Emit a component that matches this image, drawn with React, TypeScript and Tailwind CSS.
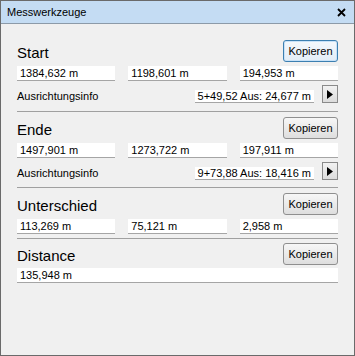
import React from "react";

const font = { fontFamily: '"Liberation Sans", Arial, sans-serif' };

function Btn({ focused }: { focused?: boolean }) {
  return (
    <div
      className={
        "w-[55px] h-[22px] rounded-[3px] border flex items-center justify-center text-[11px] text-black " +
        (focused
          ? "border-[#3c7fb1] bg-gradient-to-b from-[#f4f8fc] to-[#e3edf7] shadow-[inset_0_0_0_1px_#c8e2f8]"
          : "border-[#8f8f8f] bg-gradient-to-b from-[#f7f7f7] to-[#dedede]")
      }
    >
      Kopieren
    </div>
  );
}

function Field({ v }: { v: string }) {
  return (
    <div className="h-[15px] bg-white border-b border-[#a5a5a5] pl-[3px] text-[11px] leading-[14px] text-black whitespace-nowrap">
      {v}
    </div>
  );
}

function Header({ title, focused }: { title: string; focused?: boolean }) {
  return (
    <div className="flex items-end justify-between h-[22px]">
      <div className="text-[15px] leading-[18px] text-black">{title}</div>
      <Btn focused={focused} />
    </div>
  );
}

function Fields3({ a, b, c }: { a: string; b: string; c: string }) {
  return (
    <div className="grid grid-cols-3 gap-[13px] mt-[4px]">
      <Field v={a} />
      <Field v={b} />
      <Field v={c} />
    </div>
  );
}

function Info({ v }: { v: string }) {
  return (
    <div className="flex items-end h-[18px] mt-[4px]">
      <div className="text-[11px] leading-[14px] text-black flex-1">Ausrichtungsinfo</div>
      <div className="h-[13px] bg-white border-b border-[#a5a5a5] px-[3px] text-[11px] leading-[12px] text-black whitespace-nowrap">
        {v}
      </div>
      <div className="ml-[8px] w-[16px] h-[18px] border border-[#8a8a8a] bg-gradient-to-b from-[#f2f2f2] to-[#dcdcdc] flex items-center justify-center">
        <svg width="6" height="9" viewBox="0 0 6 9">
          <polygon points="0,0 6,4.5 0,9" fill="#000" />
        </svg>
      </div>
    </div>
  );
}

function Sep({ mt }: { mt: string }) {
  return <div className={"h-px bg-[#a0a0a0] " + mt} />;
}

export default function App() {
  return (
    <div style={font} className="w-[355px] h-[356px] border border-[#6a6a6a] bg-[#f0f0f0] flex flex-col">
      <div className="h-[23px] bg-[#c4dcf3] border-b border-[#8c9aa8] flex items-center justify-between pl-[6px] pr-[8px] shrink-0">
        <span className="text-[11px] text-black leading-[14px]">Messwerkzeuge</span>
        <svg width="9" height="9" viewBox="0 0 9 9">
          <path d="M1 1 L8 8 M8 1 L1 8" stroke="#000" strokeWidth="1.8" />
        </svg>
      </div>
      <div className="pl-[16px] pr-[16px] pt-[16px]">
        <Header title="Start" focused />
        <Fields3 a="1384,632 m" b="1198,601 m" c="194,953 m" />
        <Info v="5+49,52 Aus: 24,677 m" />
        <Sep mt="mt-[8px]" />
        <div className="mt-[5px]">
          <Header title="Ende" />
        </div>
        <Fields3 a="1497,901 m" b="1273,722 m" c="197,911 m" />
        <Info v="9+73,88 Aus: 18,416 m" />
        <Sep mt="mt-[7px]" />
        <div className="mt-[5px]">
          <Header title="Unterschied" />
        </div>
        <Fields3 a="113,269 m" b="75,121 m" c="2,958 m" />
        <Sep mt="mt-[4px]" />
        <div className="mt-[4px]">
          <Header title="Distance" />
        </div>
        <div className="mt-[3px]">
          <Field v="135,948 m" />
        </div>
      </div>
    </div>
  );
}
